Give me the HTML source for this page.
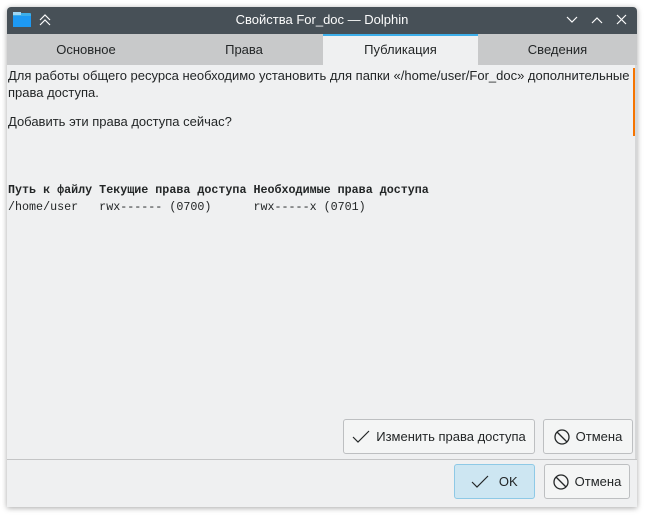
<!DOCTYPE html>
<html><head><meta charset="utf-8"><style>
*{margin:0;padding:0;box-sizing:border-box}
body{width:649px;height:520px;background:#fff;font-family:"Liberation Sans","DejaVu Sans",sans-serif;position:relative;overflow:hidden}
.win{position:absolute;left:7px;top:7px;width:630px;height:500px;background:#eff0f1;box-shadow:0 1px 6px rgba(0,0,0,.35);border-radius:4px 4px 0 0;overflow:hidden}
.title{position:absolute;left:0;top:0;width:630px;height:27px;background:#475057;color:#fcfcfc;font-size:13px;text-align:center;line-height:25px}
.tabs{position:absolute;left:0;top:27px;width:630px;height:31px;background:#c8c9ca}
.tab{position:absolute;top:0;height:31px;line-height:31px;text-align:center;font-size:13px;color:#232627}
.tab.act{background:#eff0f1;border-top:2px solid #3daee9;line-height:28px}
.t{position:absolute;left:1px;font-size:13px;color:#232627;white-space:nowrap}
.m{position:absolute;left:1px;font-family:"Liberation Mono","DejaVu Sans Mono",monospace;font-size:11.7px;color:#232627;white-space:pre}
.btn{position:absolute;border:1px solid #bdbfc1;border-radius:3px;background:#f4f5f5;font-size:13px;color:#232627;display:flex;align-items:center;justify-content:center;gap:6px}
.ok{background:#cde6f2;border-color:#8ec9e6}
</style></head><body>
<div class="win">
 <div class="title">Свойства For_doc — Dolphin
  <svg style="position:absolute;left:6px;top:5px" width="18" height="16"><rect x="0" y="1" width="18" height="14" rx="1" fill="#3daee9"/><rect x="0" y="0" width="8" height="3" fill="#9fd7f5"/><rect x="0" y="4" width="18" height="11" fill="#1d99f3"/></svg>
  <svg style="position:absolute;left:32px;top:6px" width="12" height="14" fill="none" stroke="#fcfcfc" stroke-width="1.2"><path d="M1 7l5-5 5 5M1 12l5-5 5 5"/></svg>
  <svg style="position:absolute;left:559px;top:9px" width="12" height="8" fill="none" stroke="#fcfcfc" stroke-width="1.2"><path d="M1 1l5 5 5-5"/></svg>
  <svg style="position:absolute;left:584px;top:9px" width="12" height="8" fill="none" stroke="#fcfcfc" stroke-width="1.2"><path d="M1 7l5-5 5 5"/></svg>
  <svg style="position:absolute;left:609px;top:7px" width="11" height="11" fill="none" stroke="#fcfcfc" stroke-width="1.2"><path d="M1 1l9 9M10 1l-9 9"/></svg>
 </div>
 <div class="tabs">
  <div class="tab" style="left:0;width:158px">Основное</div>
  <div class="tab" style="left:158px;width:158px">Права</div>
  <div class="tab act" style="left:316px;width:155px">Публикация</div>
  <div class="tab" style="left:471px;width:159px">Сведения</div>
 </div>
 <div style="position:absolute;left:626px;top:61px;width:2px;height:68px;background:#f67400"></div>
 <div style="position:absolute;left:628px;top:58px;width:2px;height:395px;background:#d6d7d8"></div>
 <div class="t" style="top:61px">Для работы общего ресурса необходимо установить для папки «/home/user/For_doc» дополнительные</div>
 <div class="t" style="top:78px">права доступа.</div>
 <div class="t" style="top:107px">Добавить эти права доступа сейчас?</div>
 <div class="m" style="top:176px;font-weight:bold">Путь к файлу Текущие права доступа Необходимые права доступа</div>
 <div class="m" style="top:193px">/home/user   rwx------ (0700)      rwx-----x (0701)</div>
 <div class="btn" style="left:336px;top:412px;width:192px;height:35px"><svg width="18" height="14" fill="none" stroke="#232627" stroke-width="1.2"><path d="M1 7l5 5L17 1"/></svg>Изменить права доступа</div>
 <div class="btn" style="left:536px;top:412px;width:90px;height:35px"><svg width="16" height="16" fill="none" stroke="#232627" stroke-width="1.3"><circle cx="8" cy="8" r="7"/><path d="M3 3l10 10"/></svg>Отмена</div>
 <div style="position:absolute;left:0;top:452px;width:630px;height:1px;background:#c4c5c6"></div>
 <div class="btn ok" style="left:447px;top:457px;width:81px;height:35px"><svg width="18" height="14" fill="none" stroke="#232627" stroke-width="1.2"><path d="M1 7l5 5L17 1"/></svg>&nbsp;OK</div>
 <div class="btn" style="left:537px;top:457px;width:86px;height:35px"><svg width="16" height="16" fill="none" stroke="#232627" stroke-width="1.3"><circle cx="8" cy="8" r="7"/><path d="M3 3l10 10"/></svg>Отмена</div>
</div>
</body></html>
